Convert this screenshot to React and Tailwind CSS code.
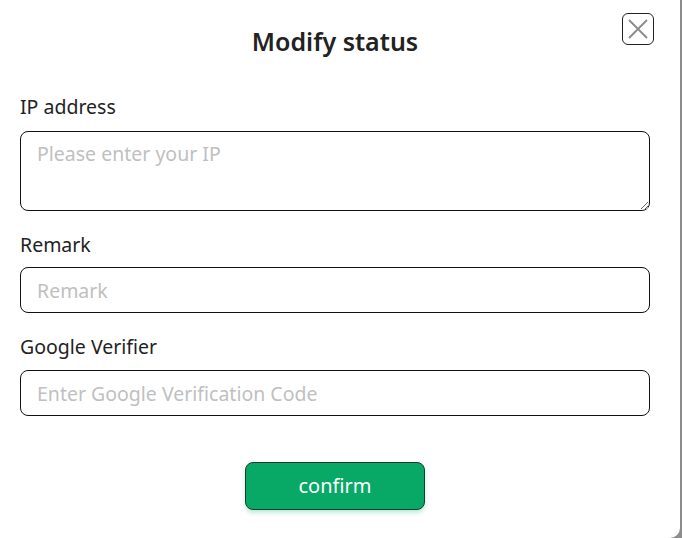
import React, { useState } from 'react';

const App = () => {
    const [ip, setIp] = useState('');
    const [remark, setRemark] = useState('');
    const [code, setCode] = useState('');

    return (
        <div className="w-[682px] h-[538px] bg-[#8c8c8c] overflow-hidden" style={{ fontFamily: '"Noto Sans", "Open Sans", sans-serif' }}>
            <div className="relative w-[680px] h-[538px] bg-white rounded-br-[10px] pl-5 pr-[30px] pt-[22px]">
                <button className="absolute top-[13px] left-[622px] w-8 h-8 border-[1.5px] border-[#222] rounded-[6px] flex items-center justify-center">
                    <svg width="22" height="22" viewBox="0 0 22 22" fill="none" stroke="#8a8a8a" strokeWidth="1.8">
                        <path d="M2 2 L20 20 M20 2 L2 20" />
                    </svg>
                </button>

                <h2 className="text-center text-[25px] leading-[38px] font-semibold text-[#222]">Modify status</h2>

                <label className="block mt-[35px] text-[19.5px] leading-6 text-[#222]">IP address</label>
                <textarea
                    value={ip}
                    onChange={(e) => setIp(e.target.value)}
                    placeholder="Please enter your IP"
                    className="block mt-3 w-full h-[80px] border border-[#111] rounded-[8px] px-4 py-[10px] text-[19.5px] leading-6 text-[#222] placeholder-[#c0c0c0] outline-none"
                />

                <label className="block mt-[22px] text-[19.5px] leading-6 text-[#222]">Remark</label>
                <input
                    type="text"
                    value={remark}
                    onChange={(e) => setRemark(e.target.value)}
                    placeholder="Remark"
                    className="block mt-[10px] w-full h-[46px] border border-[#111] rounded-[8px] px-4 text-[19.5px] text-[#222] placeholder-[#c0c0c0] outline-none"
                />

                <label className="block mt-[22px] text-[19.5px] leading-6 text-[#222]">Google Verifier</label>
                <input
                    type="text"
                    value={code}
                    onChange={(e) => setCode(e.target.value)}
                    placeholder="Enter Google Verification Code"
                    className="block mt-[11px] w-full h-[46px] border border-[#111] rounded-[8px] px-4 text-[19.5px] text-[#222] placeholder-[#c0c0c0] outline-none"
                />

                <div className="flex justify-center mt-[46px]">
                    <button className="w-[180px] h-[48px] bg-[#08a866] border border-[#1d3a2c] rounded-[8px] text-white text-[20px] shadow-[0_3px_4px_rgba(8,168,102,0.25)]">
                        confirm
                    </button>
                </div>
            </div>
        </div>
    );
};

export default App;
